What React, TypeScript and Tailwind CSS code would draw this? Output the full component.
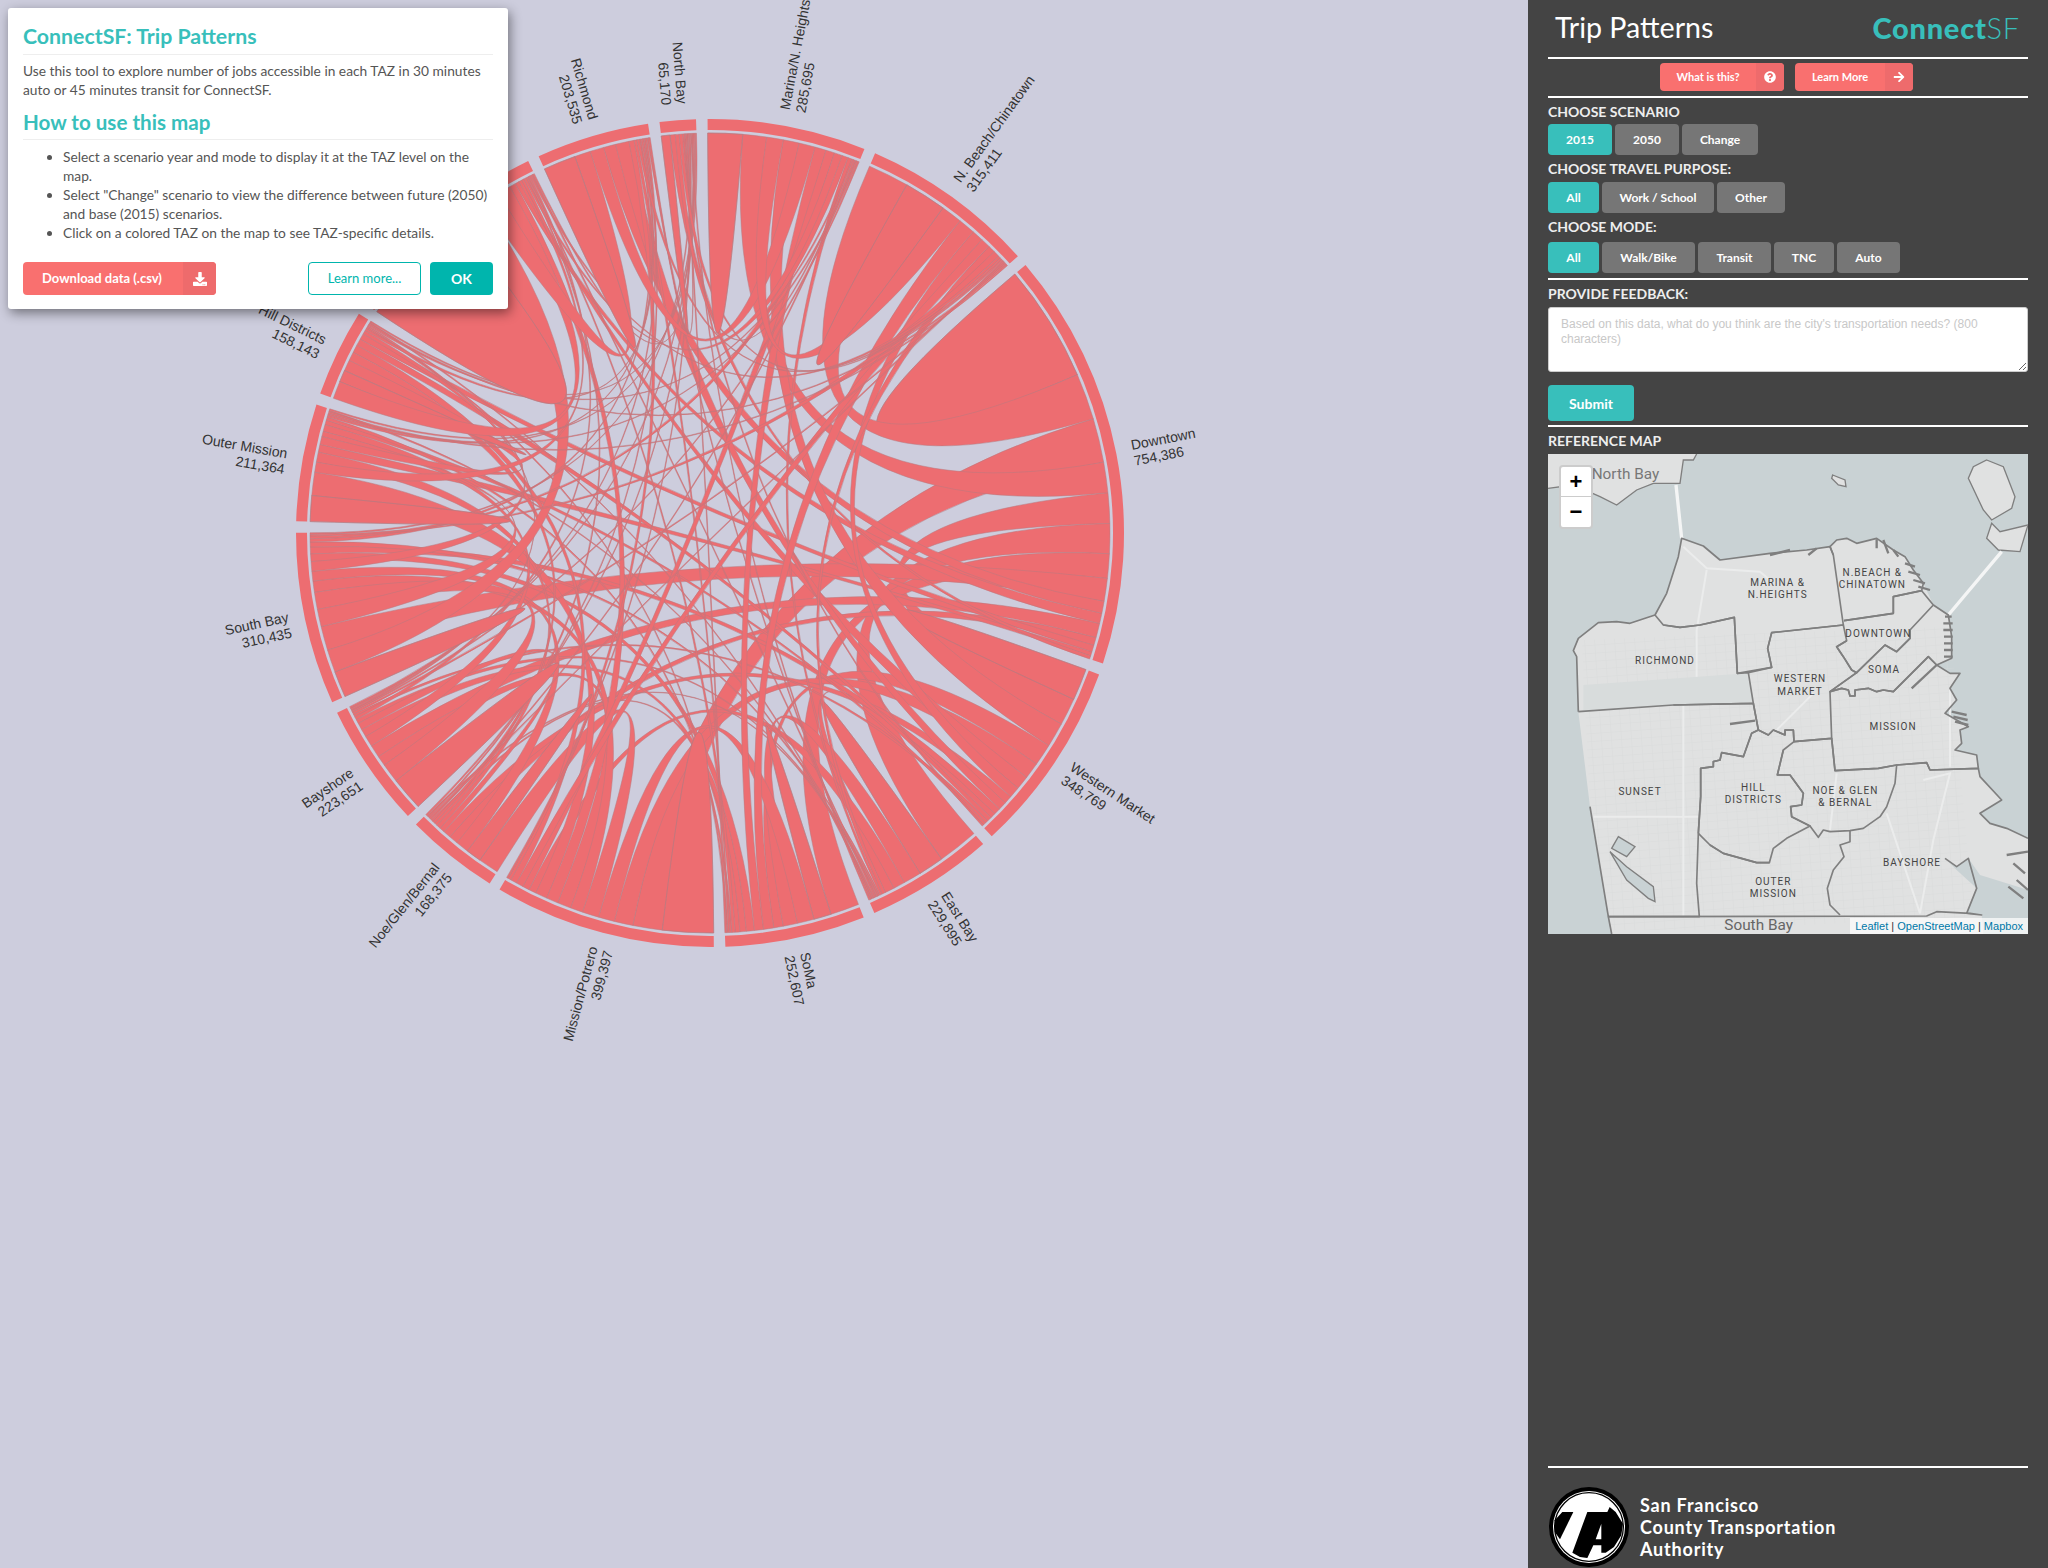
import { FaArrowRight, FaDownload, FaQuestionCircle } from 'react-icons/fa';

const DEG = Math.PI / 180;
const CHORD_R = 400;
const RING_IN = 403;
const RING_OUT = 414;
const PAD = 1.6;
const START = 49.65;

// clockwise from Downtown
const GROUPS: { name: string; label: string; value: number }[] = [
  { name: 'Downtown', label: '754,386', value: 754386 },
  { name: 'Western Market', label: '348,769', value: 348769 },
  { name: 'East Bay', label: '229,895', value: 229895 },
  { name: 'SoMa', label: '252,607', value: 252607 },
  { name: 'Mission/Potrero', label: '399,397', value: 399397 },
  { name: 'Noe/Glen/Bernal', label: '168,375', value: 168375 },
  { name: 'Bayshore', label: '223,651', value: 223651 },
  { name: 'South Bay', label: '310,435', value: 310435 },
  { name: 'Outer Mission', label: '211,364', value: 211364 },
  { name: 'Hill Districts', label: '158,143', value: 158143 },
  { name: 'Sunset', label: '390,000', value: 390000 },
  { name: 'Richmond', label: '203,535', value: 203535 },
  { name: 'North Bay', label: '65,170', value: 65170 },
  { name: 'Marina/N. Heights', label: '285,695', value: 285695 },
  { name: 'N. Beach/Chinatown', label: '315,411', value: 315411 },
];

// [partner, width] in thousands, in the order they sit around each group
const ROWS: [number, number][][] = [
  [[0, 216], [14, 85], [4, 81], [13, 56], [1, 56], [2, 55], [3, 45], [7, 42], [11, 22], [10, 19], [6, 26], [5, 15], [9, 12], [8, 8], [12, 6]],
  [[1, 58], [0, 50], [13, 45], [3, 40], [4, 30], [10, 25], [14, 20], [5, 15], [11, 15], [7, 12], [2, 10], [9, 8], [6, 6], [8, 5], [12, 3]],
  [[0, 81], [2, 51], [3, 36], [4, 23], [1, 19], [14, 7], [13, 5], [7, 3], [6, 2], [5, 1], [10, 1], [8, 1], [9, 1], [11, 1], [12, 1]],
  [[0, 54], [3, 33], [4, 31], [2, 27], [1, 18], [14, 19], [13, 17], [7, 15], [6, 12], [5, 9], [10, 6], [8, 4], [11, 2], [9, 1], [12, 1]],
  [[4, 95], [0, 55], [1, 35], [3, 30], [5, 31], [7, 23], [6, 26], [10, 22], [8, 22], [2, 14], [13, 13], [14, 13], [9, 12], [11, 6], [12, 2]],
  [[4, 40], [5, 30], [7, 25], [0, 18], [1, 15], [6, 10], [8, 8], [9, 6], [10, 5], [3, 4], [13, 3], [14, 2], [11, 1], [2, 1], [12, 1]],
  [[6, 63], [7, 36], [4, 19], [0, 24], [8, 20], [3, 15], [5, 13], [2, 8], [10, 6], [1, 5], [14, 4], [13, 3], [9, 3], [11, 2], [12, 1]],
  [[7, 49], [10, 42], [0, 45], [8, 32], [6, 32], [4, 21], [5, 18], [9, 18], [3, 14], [1, 13], [2, 9], [11, 6], [13, 5], [14, 3], [12, 2]],
  [[8, 49], [4, 44], [10, 19], [5, 19], [0, 15], [9, 15], [7, 10], [6, 13], [1, 9], [3, 6], [11, 4], [13, 3], [14, 2], [2, 1], [12, 1]],
  [[10, 38], [9, 26], [8, 24], [5, 19], [4, 17], [1, 15], [0, 13], [7, 8], [11, 5], [3, 4], [6, 3], [13, 3], [14, 2], [2, 1], [12, 1]],
  [[10, 230], [7, 60], [11, 35], [9, 25], [4, 12], [0, 8], [1, 6], [8, 5], [13, 4], [5, 3], [3, 3], [6, 2], [14, 1], [2, 1], [12, 1]],
  [[11, 64], [10, 32], [13, 27], [0, 24], [1, 27], [4, 10], [3, 6], [14, 5], [7, 3], [9, 2], [8, 1], [5, 1], [6, 1], [2, 1], [12, 1]],
  [[12, 22], [0, 13], [13, 10], [14, 8], [1, 5], [3, 3], [11, 2], [4, 1], [10, 1], [7, 1], [2, 1], [5, 1], [6, 1], [8, 1], [9, 1]],
  [[13, 67], [0, 46], [14, 32], [1, 31], [11, 31], [3, 22], [4, 17], [10, 15], [7, 12], [2, 8], [9, 3], [12, 3], [5, 3], [8, 2], [6, 1]],
  [[0, 78], [14, 80], [13, 40], [3, 32], [1, 22], [4, 18], [2, 14], [7, 12], [10, 5], [11, 4], [12, 3], [5, 2], [6, 1], [9, 1], [8, 1]],
];

const pt = (a: number, r: number) => `${(r * Math.sin(a * DEG)).toFixed(2)} ${(-r * Math.cos(a * DEG)).toFixed(2)}`;

function buildChart() {
  const total = GROUPS.reduce((s, g) => s + g.value, 0);
  const perDeg = (360 - PAD * GROUPS.length) / total;
  const arcs: Record<string, [number, number]> = {};
  let a = START;
  const groups = GROUPS.map((g, i) => {
    const span = g.value * perDeg;
    const widths = ROWS[i].map(([, w]) => Math.max(w, 3));
    const rowSum = widths.reduce((s, w) => s + w, 0);
    let sub = a;
    ROWS[i].forEach(([j], k) => {
      const d = (widths[k] / rowSum) * span;
      arcs[`${i}-${j}`] = [sub, sub + d];
      sub += d;
    });
    const out = { ...g, a0: a, a1: a + span };
    a += span + PAD;
    return out;
  });
  const ribbons: string[] = [];
  for (let i = 0; i < GROUPS.length; i++) {
    for (let j = i; j < GROUPS.length; j++) {
      const [s0, s1] = arcs[`${i}-${j}`];
      const [t0, t1] = arcs[`${j}-${i}`];
      ribbons.push(
        `M${pt(s0, CHORD_R)}A${CHORD_R} ${CHORD_R} 0 0 1 ${pt(s1, CHORD_R)}Q0 0 ${pt(t0, CHORD_R)}A${CHORD_R} ${CHORD_R} 0 0 1 ${pt(t1, CHORD_R)}Q0 0 ${pt(s0, CHORD_R)}Z`
      );
    }
  }
  return { groups, ribbons };
}

function ChordChart() {
  const { groups, ribbons } = buildChart();
  return (
    <svg width={1528} height={1568} className="block">
      <g transform="translate(710 533)">
        {groups.map((g) => (
          <path
            key={g.name}
            fill="#ed6d71"
            d={`M${pt(g.a0, RING_OUT)}A${RING_OUT} ${RING_OUT} 0 0 1 ${pt(g.a1, RING_OUT)}L${pt(g.a1, RING_IN)}A${RING_IN} ${RING_IN} 0 0 0 ${pt(g.a0, RING_IN)}Z`}
          />
        ))}
        {ribbons.map((d, i) => (
          <path key={i} d={d} fill="#ed6d71" stroke="#b67b81" strokeWidth={0.5} />
        ))}
        {groups.map((g) => {
          const mid = ((g.a0 + g.a1) / 2) % 360;
          const left = mid > 180;
          return (
            <g key={g.name} transform={`rotate(${mid - 90}) translate(430 0) ${left ? 'rotate(180)' : ''}`}>
              <text y={-1} textAnchor={left ? 'end' : 'start'} className="fill-[#333] text-[14px] font-['Liberation_Sans']">
                {g.name}
              </text>
              <text y={15} textAnchor={left ? 'end' : 'start'} className="fill-[#333] text-[14px] font-['Liberation_Sans']">
                {g.label}
              </text>
            </g>
          );
        })}
      </g>
    </svg>
  );
}

function Modal() {
  return (
    <div className="absolute left-2 top-2 h-[301px] w-[500px] rounded-[3px] bg-white px-[15px] pt-[13px] text-[#555] shadow-[2px_4px_12px_rgba(0,0,0,0.45)]">
      <h2 className="h-[34px] border-b border-[#eee] text-[21.3px] font-bold leading-[30px] text-[#38bfbb]">ConnectSF: Trip Patterns</h2>
      <p className="mt-[6px] text-[13.75px] leading-[19px]">
        Use this tool to explore number of jobs accessible in each TAZ in 30 minutes auto or 45 minutes transit for ConnectSF.
      </p>
      <h2 className="mt-[6px] h-[35px] border-b border-[#eee] text-[20.6px] font-bold leading-[34px] text-[#38bfbb]">How to use this map</h2>
      <ul className="mt-[7px] list-disc pl-10 text-[13.75px] leading-[19px]">
        <li>Select a scenario year and mode to display it at the TAZ level on the map.</li>
        <li>Select "Change" scenario to view the difference between future (2050) and base (2015) scenarios.</li>
        <li>Click on a colored TAZ on the map to see TAZ-specific details.</li>
      </ul>
      <div className="mt-[20px] flex items-stretch">
        <div className="flex h-[33px] w-[193px] overflow-hidden rounded-[4px] bg-[#f9706f] text-[13px] font-bold text-white">
          <span className="flex w-[160px] items-center pl-[19px]">Download data (.csv)</span>
          <span className="flex flex-1 items-center justify-center bg-[#ee6b6c]">
            <FaDownload size={14} />
          </span>
        </div>
        <div className="ml-auto flex h-[33px] w-[113px] items-center justify-center rounded-[4px] border border-[#00b5ad] text-[13px] text-[#00b5ad]">
          Learn more...
        </div>
        <div className="ml-[9px] flex h-[33px] w-[63px] items-center justify-center rounded-[4px] bg-[#00b5ad] text-[14px] font-bold text-white">OK</div>
      </div>
    </div>
  );
}

function Pill({ label, active, width }: { label: string; active?: boolean; width: string }) {
  return (
    <div
      className={`flex h-[31px] items-center justify-center rounded-[4px] text-[12px] font-bold text-white ${width} ${active ? 'bg-[#38bfbb]' : 'bg-[#767676]'}`}
    >
      {label}
    </div>
  );
}

const Rule = ({ className = '' }: { className?: string }) => <div className={`h-[2px] bg-white ${className}`} />;

const Heading = ({ children, className = '' }: { children: string; className?: string }) => (
  <div className={`text-[14px] font-bold leading-[17px] text-[#eee] ${className}`}>{children}</div>
);

const LAND = '#e0e1e1';
const WATER = '#c9d2d4';
const LINE = '#7f7f7f';

const DISTRICTS = [
  '115,815 110,650 100,632 115,595 175,548 230,545 270,550 345,525 370,555 420,562 480,555 583,532 592,700 625,698 640,790 400,795',
  '345,525 380,460 415,350 425,295 490,318 540,360 690,340 800,330 870,320 880,345 910,555 695,578 683,625 695,682 592,700 583,532 480,555 420,562 370,555',
  '880,345 870,320 890,300 920,295 950,310 1010,295 1060,330 1095,350 1120,390 1150,430 1145,452 1060,470 1060,520 912,542',
  '912,542 1060,520 1060,470 1145,452 1180,495 1110,570 1110,595 1070,635 1035,615 950,698 935,690 910,650 890,620 920,602',
  '1180,495 1225,525 1235,590 1235,655 1190,675 1165,650 1060,755 1030,750 1010,755 985,745 945,750 945,768 930,768 925,750 905,745 870,755 950,698 1035,615 1070,635 1110,595 1110,570',
  '625,698 695,682 683,625 695,578 910,555 920,602 890,620 910,650 935,690 950,698 870,755 875,895 762,905 760,870 735,870 735,885 700,870 685,885 655,870 640,790',
  '870,755 905,745 925,750 930,768 945,768 945,750 985,745 1010,755 1030,750 1060,755 1165,650 1190,675 1230,700 1260,700 1230,745 1250,780 1215,820 1285,860 1260,870 1265,910 1245,930 1310,945 1315,985 1170,990 1160,968 1070,975 1015,985 885,992 875,895',
  '115,815 400,795 640,790 655,870 635,880 610,950 545,938 540,960 520,965 520,980 482,985 482,1070 475,1180 470,1330 478,1430 205,1430 150,1100',
  '475,1180 482,1070 482,985 520,980 520,965 540,960 545,938 610,950 635,880 655,870 685,885 700,870 735,885 735,870 760,870 762,905 730,930 712,1005 750,1005 790,1060 785,1095 752,1100 755,1130 810,1158 740,1195 700,1225 688,1268 650,1268 550,1240 510,1215',
  '762,905 875,895 885,992 1015,985 1070,975 1065,1030 1040,1100 1020,1130 970,1165 930,1172 870,1175 850,1170 835,1192 810,1158 755,1130 752,1100 785,1095 790,1060 750,1005 712,1005 730,930',
  '1070,975 1160,968 1170,990 1315,985 1320,1010 1385,1080 1320,1120 1350,1150 1400,1165 1464,1195',
  '930,1172 930,1205 900,1215 912,1250 880,1290 862,1345 870,1395 900,1425',
  '475,1180 510,1215 550,1240 650,1268 688,1268',
  '205,1430 1160,1428 1190,1415 1290,1420 1325,1425 1280,1420 1310,1345 1285,1255 1250,1280 1215,1255',
  '205,1430 215,1482',
];

const MAP_LABELS: [number, number, string][] = [
  [713, 437, 'MARINA &'],
  [713, 474, 'N.HEIGHTS'],
  [997, 408, 'N.BEACH &'],
  [997, 444, 'CHINATOWN'],
  [1015, 592, 'DOWNTOWN'],
  [1032, 700, 'SOMA'],
  [780, 727, 'WESTERN'],
  [780, 764, 'MARKET'],
  [375, 671, 'RICHMOND'],
  [1059, 870, 'MISSION'],
  [300, 1064, 'SUNSET'],
  [640, 1052, 'HILL'],
  [640, 1088, 'DISTRICTS'],
  [916, 1061, 'NOE & GLEN'],
  [916, 1098, '& BERNAL'],
  [1116, 1279, 'BAYSHORE'],
  [700, 1335, 'OUTER'],
  [700, 1372, 'MISSION'],
];

function ReferenceMap() {
  return (
    <div className="relative mt-[5px] h-[480px] w-[480px] overflow-hidden bg-[#c9d2d4]">
      <svg viewBox="24 42 1440 1440" width={480} height={480} className="block">
        <defs>
          <pattern id="streets" width="30" height="24" patternUnits="userSpaceOnUse" patternTransform="rotate(-4)">
            <path d="M0 0H30M0 0V24" stroke="#d6d7d7" strokeWidth="2.5" fill="none" />
          </pattern>
        </defs>
        <polygon fill={LAND} points="24,42 470,42 460,60 430,60 420,130 340,130 290,150 230,195 180,170 100,135 24,145" />
        <polygon
          fill={LAND}
          points="425,295 490,318 540,360 690,340 800,330 870,320 890,300 920,295 950,310 1010,295 1060,330 1095,350 1120,390 1150,430 1180,495 1225,525 1235,590 1235,655 1190,675 1230,700 1260,700 1230,745 1250,780 1215,820 1285,860 1260,870 1265,910 1245,930 1310,945 1315,985 1320,1010 1385,1080 1320,1120 1350,1150 1400,1165 1464,1195 1464,1482 215,1482 150,1100 115,815 110,650 100,630 115,595 175,548 230,545 270,550 345,525 380,460 415,350"
        />
        <polygon fill="url(#streets)" points="125,600 1230,560 1250,780 1260,980 1300,1430 480,1470 215,1470 150,1100" opacity="0.75" />
        <polygon fill={WATER} points="1215,1255 1250,1280 1285,1255 1320,1305 1400,1330 1464,1350 1464,1482 1330,1482 1325,1425 1280,1420 1310,1345 1250,1290" />
        <polygon fill={LAND} stroke={LINE} strokeWidth="4" points="1340,60 1390,80 1425,170 1415,205 1355,240 1330,210 1285,115 1300,80" />
        <polygon fill={LAND} stroke={LINE} strokeWidth="4" points="1355,250 1380,275 1464,255 1440,335 1375,330 1340,295" />
        <polygon fill={LAND} stroke={LINE} strokeWidth="4" points="878,105 915,120 918,140 895,135 875,115" />
        <polygon fill={WATER} stroke={LINE} strokeWidth="4" points="210,1235 260,1280 340,1340 345,1385 325,1375 260,1320" />
        <polygon fill={WATER} stroke={LINE} strokeWidth="4" points="235,1190 285,1220 260,1250 215,1225" />
        <polyline fill="none" stroke={LINE} strokeWidth="4" points="470,42 460,60 430,60 420,130 340,130 290,150 230,195 180,170 100,135 24,145" />
        <path d="M408 135L425 295M1225 525L1385 335" stroke="#f4f5f5" strokeWidth="10" fill="none" />
        <path
          d="M430 320L500 385L660 395L690 420M430 780V1430M160 1130H480M820 760L710 870M1230 750V980M1150 1020L1230 1000L1180 1200L1140 1420M1040 1120L1100 1300L1140 1420M470 570V720M500 390L470 570M890 1000L870 1170"
          stroke="#ebecec"
          strokeWidth="6"
          fill="none"
        />
        <polygon fill="#d8dcdc" points="130,735 620,700 640,785 130,810" />
        {DISTRICTS.map((points, i) => (
          <polyline key={i} points={points} fill="none" stroke={LINE} strokeWidth="5" strokeLinejoin="round" />
        ))}
        <path
          d="M1010 298V325M1030 300L1045 340M1060 330L1075 350M1095 370L1125 380M1105 395L1140 405M1120 420L1155 430M1135 440L1170 450M1215 530H1235M1210 550H1238M1210 570H1238M1212 590H1238M1212 610H1238M1212 630H1238M1212 650H1238M1235 815L1280 825M1240 830L1283 840M1245 845L1285 855M570 852L645 842M1115 745L1190 675M830 325L805 345M690 345L750 330M1400 1245L1464 1235M1420 1270L1455 1300M1405 1340L1450 1375M1430 1320L1464 1350"
          stroke={LINE}
          strokeWidth="7"
          fill="none"
        />
        {MAP_LABELS.map(([x, y, text]) => (
          <text key={text} x={x} y={y} textAnchor="middle" fill="#444" fontSize="30" letterSpacing="3" className="font-['Roboto']">
            {text}
          </text>
        ))}
        <text x="155" y="117" fill="#777" fontSize="46" className="font-['Roboto']">North Bay</text>
        <text x="553" y="1470" fill="#666" fontSize="46" className="font-['Roboto']">South Bay</text>
      </svg>
      <div className="absolute left-[11px] top-[11px] overflow-hidden rounded-[4px] border-2 border-[rgba(0,0,0,0.2)] bg-white text-black">
        <div className="flex h-[30px] w-[30px] items-center justify-center border-b border-[#ccc] font-['Liberation_Sans'] text-[22px] font-bold leading-none">+</div>
        <div className="flex h-[30px] w-[30px] items-center justify-center font-['Liberation_Sans'] text-[22px] font-bold leading-none">−</div>
      </div>
      <div className="absolute bottom-0 right-0 bg-[rgba(255,255,255,0.7)] px-[5px] font-['Liberation_Sans'] text-[11px] leading-[16px] text-[#333]">
        <span className="text-[#0078a8]">Leaflet</span> | <span className="text-[#0078a8]">OpenStreetMap</span> | <span className="text-[#0078a8]">Mapbox</span>
      </div>
    </div>
  );
}

function AuthorityLogo() {
  return (
    <svg viewBox="0 0 270 264" width={90} height={88} className="block">
      <circle cx="135" cy="135" r="120" fill="#000" />
      <circle cx="135" cy="135" r="108" fill="#fff" />
      <circle cx="135" cy="135" r="103" fill="none" stroke="#000" strokeWidth="4" />
      <polygon fill="#000" points="55,90 88,90 48,172 32,150 32,115" />
      <polygon fill="#000" points="130,90 190,90 197,75 215,90 237,125 232,160 210,195 185,212 172,212 172,190 148,190 130,228 108,225 85,212" />
      <polygon fill="#fff" points="172,125 172,172 155,172" />
    </svg>
  );
}

export default function App() {
  return (
    <div className="flex h-[1568px] w-[2048px] overflow-hidden bg-[#cdcddd] font-['Lato']">
      <div className="relative w-[1528px] overflow-hidden">
        <ChordChart />
        <Modal />
      </div>
      <div className="flex w-[520px] flex-col bg-[#444] px-5">
        <div className="flex h-[56px] items-center justify-between pb-[2px]">
          <span className="pl-[7px] text-[28.6px] leading-none text-white">Trip Patterns</span>
          <span className="pr-[8px] text-[29px] leading-none tracking-[0.75px] text-[#38bfbb]">
            <span className="font-black">Connect</span>
            <span className="font-light">SF</span>
          </span>
        </div>
        <Rule className="mt-[1px]" />
        <div className="mt-[4px] flex h-[28px] justify-center gap-[11px] pr-[3px] text-[11px] font-bold text-white">
          <div className="flex w-[124px] overflow-hidden rounded-[4px] bg-[#f9706f]">
            <span className="flex w-[96px] items-center justify-center">What is this?</span>
            <span className="flex flex-1 items-center justify-center bg-[#ee6b6c]">
              <FaQuestionCircle size={12} />
            </span>
          </div>
          <div className="flex w-[118px] overflow-hidden rounded-[4px] bg-[#f9706f]">
            <span className="flex w-[90px] items-center justify-center">Learn More</span>
            <span className="flex flex-1 items-center justify-center bg-[#ee6b6c]">
              <FaArrowRight size={12} />
            </span>
          </div>
        </div>
        <Rule className="mt-[5px]" />
        <Heading className="mt-[5px]">CHOOSE SCENARIO</Heading>
        <div className="mt-[4px] flex gap-[3px]">
          <Pill label="2015" active width="w-[64px]" />
          <Pill label="2050" width="w-[64px]" />
          <Pill label="Change" width="w-[76px]" />
        </div>
        <Heading className="mt-[5px]">CHOOSE TRAVEL PURPOSE:</Heading>
        <div className="mt-[5px] flex gap-[3px]">
          <Pill label="All" active width="w-[51px]" />
          <Pill label="Work / School" width="w-[112px]" />
          <Pill label="Other" width="w-[68px]" />
        </div>
        <Heading className="mt-[5px]">CHOOSE MODE:</Heading>
        <div className="mt-[7px] flex gap-[3px]">
          <Pill label="All" active width="w-[51px]" />
          <Pill label="Walk/Bike" width="w-[93px]" />
          <Pill label="Transit" width="w-[73px]" />
          <Pill label="TNC" width="w-[60px]" />
          <Pill label="Auto" width="w-[63px]" />
        </div>
        <Rule className="mt-[5px]" />
        <Heading className="mt-[5px]">PROVIDE FEEDBACK:</Heading>
        <textarea
          readOnly
          placeholder="Based on this data, what do you think are the city's transportation needs? (800 characters)"
          className="mt-[5px] h-[65px] w-[480px] rounded-[3px] border border-[#ccc] bg-white px-[12px] py-[9px] font-['Liberation_Sans'] text-[12px] leading-[15px] placeholder:text-[#c8c8c8]"
        />
        <div className="mt-[13px] flex h-[36px] w-[86px] items-center justify-center rounded-[4px] bg-[#38bfbb] text-[14px] font-bold text-white">Submit</div>
        <Rule className="mt-[4px]" />
        <Heading className="mt-[5px]">REFERENCE MAP</Heading>
        <ReferenceMap />
        <Rule className="mt-auto" />
        <div className="mt-[13px] flex h-[87px] items-start">
          <div className="-ml-[4px] mt-[1px]">
            <AuthorityLogo />
          </div>
          <div className="ml-[6px] mt-[13px] text-[18px] font-bold leading-[22px] tracking-[0.8px] text-white">
            San Francisco
            <br />
            County Transportation
            <br />
            Authority
          </div>
        </div>
      </div>
    </div>
  );
}
